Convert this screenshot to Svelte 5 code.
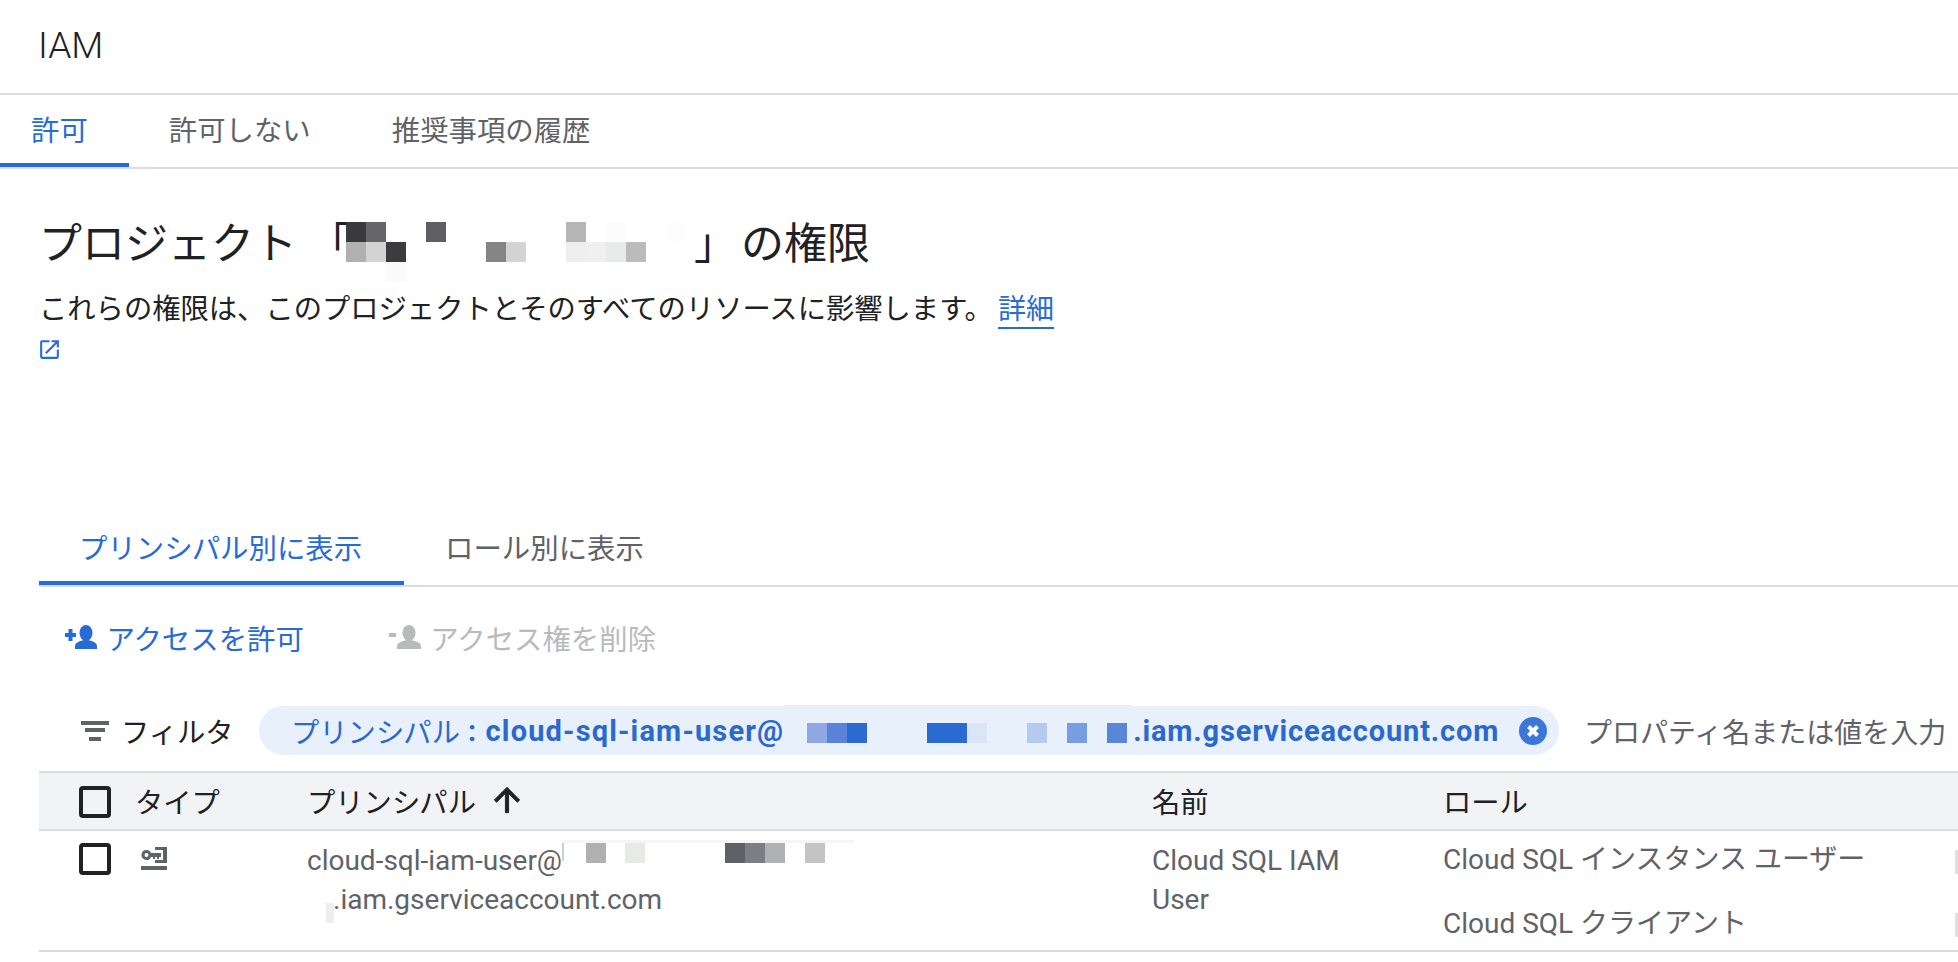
<script>
	// censored parts of the screenshot, drawn as blocks: [x, y, colour]
	const titleBlocks = [
		[0, 0, '#3a3a3c'], [20, 0, '#666668'], [80, 0, '#5f5f61'], [220, 0, '#b5b5b5'], [260, 0, '#fcfcfc'], [320, 0, '#fdfdfd'],
		[0, 20, '#b0b0b0'], [20, 20, '#d3d3d3'], [40, 20, '#3c3c3e'], [140, 20, '#858585'], [160, 20, '#d3d3d3'],
		[220, 20, '#eeeeee'], [240, 20, '#f0f0f0'], [260, 20, '#e8e9e9'], [280, 20, '#bbbbbb'],
		[40, 40, '#fafafa']
	];
	const chipBlocks = [
		[23, 0, '#8fa8e3'], [43, 0, '#5a82d8'], [63, 0, '#2b6ad0'], [143, 0, '#2b6ad0'], [163, 0, '#2b6ad0'],
		[183, 0, '#dae5f8'], [243, 0, '#b5caf0'], [283, 0, '#799de2'], [323, 0, '#5a86d8']
	];
	const rowBlocks = [
		[24, 0, '#b0b0b0'], [63, 0, '#e8eae8'], [163, 0, '#5f6166'], [183, 0, '#7c7e84'], [203, 0, '#b0b1b3'], [243, 0, '#c4c4c4']
	];

	const topTabs = ['許可', '許可しない', '推奨事項の履歴'];
	const roles = ['Cloud SQL インスタンス ユーザー', 'Cloud SQL クライアント'];
</script>

{#snippet blocks(list)}
	{#each list as [x, y, colour]}
		<i class="block" style="left: {x}px; top: {y}px; background: {colour};"></i>
	{/each}
{/snippet}

<div class="page">
	<header class="top">IAM</header>

	<nav class="tabs main-tabs">
		{#each topTabs as tab, i}
			<span class="tab" class:active={i === 0}>{tab}</span>
		{/each}
	</nav>

	<section class="intro">
		<h1>
			<span>プロジェクト</span>
			<span class="bracket-open">「</span>
			<span class="title-mask">{@render blocks(titleBlocks)}</span>
			<span>」</span>
			<span class="suffix">の権限</span>
		</h1>
		<p>
			これらの権限は、このプロジェクトとそのすべてのリソースに影響します。<a href="#top">詳細</a>
			<svg class="ext" viewBox="0 0 24 24"><path d="M19 19H5V5h7V3H5c-1.11 0-2 .9-2 2v14c0 1.1.89 2 2 2h14c1.1 0 2-.9 2-2v-7h-2v7zM14 3v2h3.59l-9.83 9.83 1.41 1.41L19 6.41V10h2V3h-7z" /></svg>
		</p>
	</section>

	<section class="content">
		<nav class="tabs sub-tabs">
			<span class="tab active">プリンシパル別に表示</span>
			<span class="tab">ロール別に表示</span>
		</nav>

		<div class="actions">
			<button class="action">
				<svg viewBox="0 0 32 24">
					<rect x="0" y="8" width="11" height="4" />
					<rect x="3.500" y="4" width="4" height="12" />
					<ellipse cx="21" cy="8" rx="6.500" ry="8" />
					<path d="M10 24v-3c0-3.500 6-6 11-6s11 2.500 11 6v3z" />
				</svg>
				アクセスを許可
			</button>
			<button class="action disabled">
				<svg viewBox="0 0 32 24">
					<rect x="0" y="8" width="7" height="4" />
					<ellipse cx="20" cy="8" rx="6.500" ry="8" />
					<path d="M8 24v-3c0-3.500 7-6 12-6s12 2.500 12 6v3z" />
				</svg>
				アクセス権を削除
			</button>
		</div>

		<div class="filter">
			<svg class="filter-icon" viewBox="0 0 28 20">
				<rect x="0" y="0" width="28" height="4" />
				<rect x="4" y="7" width="20" height="4" />
				<rect x="8" y="16" width="12" height="4" />
			</svg>
			<span class="filter-label">フィルタ</span>
			<div class="chip">
				<span class="chip-key">プリンシパル</span>
				<b class="chip-user">: cloud-sql-iam-user@</b>
				<span class="chip-mask">{@render blocks(chipBlocks)}</span>
				<b class="chip-domain">.iam.gserviceaccount.com</b>
				<svg class="chip-close" viewBox="0 0 28 28">
					<circle cx="14" cy="14" r="14" />
					<path d="M9.500 9.500l9 9M18.500 9.500l-9 9" />
				</svg>
			</div>
			<span class="placeholder">プロパティ名または値を入力</span>
		</div>

		<div class="table">
			<div class="grid head">
				<span class="check"></span>
				<span>タイプ</span>
				<span class="sort">
					プリンシパル
					<svg viewBox="0 0 24 24"><path d="M4 12l1.410 1.410L11 7.830V20h2V7.830l5.580 5.590L20 12l-8-8-8 8z" /></svg>
				</span>
				<span>名前</span>
				<span>ロール</span>
			</div>
			<div class="grid row">
				<span class="check"></span>
				<svg class="key" viewBox="0 0 26 23">
					<path d="M14 0h12v16H14v-3h8V3h-8z" />
					<path fill-rule="evenodd" d="M5.500 3a5 5 0 0 1 4.600 3H20v4h-2v2h-2v-2h-2v2h-2v-2h-1.900a5 5 0 1 1-4.600-7zm0 3a2 2 0 1 0 0 4 2 2 0 0 0 0-4z" />
					<rect x="0" y="19" width="26" height="4" />
				</svg>
				<div class="principal">
					<div class="line">
						cloud-sql-iam-user@<span class="row-mask">{@render blocks(rowBlocks)}</span>
					</div>
					<div class="line second"><i class="stub"></i>.iam.gserviceaccount.com</div>
				</div>
				<div class="name">Cloud SQL IAM<br />User</div>
				<div class="roles">
					{#each roles as role}
						<div>{role}</div>
					{/each}
				</div>
				<div class="ticks">
					<i></i>
					<i></i>
				</div>
			</div>
		</div>
	</section>
</div>

<style>
	:global(body) {
		margin: 0;
		background: #fff;
		overflow: hidden;
	}

	.page {
		width: 1958px;
		height: 962px;
		overflow: hidden;
		font-family: Roboto, 'Noto Sans CJK JP', sans-serif;
		color: #202124;
	}

	.top {
		height: 93px;
		line-height: 91px;
		padding-left: 38px;
		font-size: 37px;
		font-weight: 300;
	}

	.tabs {
		display: flex;
		border-bottom: 2px solid #dadce0;
		font-size: 28.400px;
		color: #5f6368;
	}
	.tab {
		box-sizing: border-box;
		border-bottom: 4px solid transparent;
	}
	.tab.active {
		color: #276bd8;
		border-bottom-color: #276bd8;
	}

	.main-tabs {
		border-top: 2px solid #dadce0;
		height: 72px;
	}
	.main-tabs .tab {
		height: 72px;
		line-height: 73px;
		padding: 0 41px 0 40px;
	}
	.main-tabs .tab:first-child {
		padding: 0 41px 0 31px;
	}

	.intro {
		box-sizing: border-box;
		height: 346px;
		padding: 46px 0 0 39px;
	}
	h1 {
		margin: 0;
		display: flex;
		align-items: center;
		height: 50px;
		font-size: 43px;
		font-weight: 400;
	}
	.bracket-open {
		margin-left: 11px;
	}
	.title-mask {
		position: relative;
		top: 7px;
		display: block;
		width: 348px;
		height: 50px;
		margin-left: -5px;
	}
	.suffix {
		margin-left: 4px;
	}
	.block {
		position: absolute;
		width: 20px;
		height: 20px;
	}
	p {
		margin: 25px 0 0;
		width: 1040px;
		font-size: 28.300px;
		line-height: 39px;
	}
	a {
		margin-left: 5px;
		padding-bottom: 1px;
		font-size: 28px;
		color: #276bd8;
		text-decoration: none;
		border-bottom: 2px solid #276bd8;
	}
	.ext {
		display: block;
		width: 25px;
		height: 25px;
		margin: 8px 0 0 -2px;
		fill: #276bd8;
	}

	.content {
		margin-left: 39px;
	}
	.sub-tabs {
		height: 70px;
	}
	.sub-tabs .tab {
		height: 70px;
		line-height: 70px;
		padding: 0 41px;
	}
	.sub-tabs .tab:first-child {
		padding: 0 42px 0 40px;
	}

	.actions {
		display: flex;
		align-items: center;
		height: 100px;
		padding-left: 26px;
	}
	.action {
		display: flex;
		align-items: center;
		gap: 9.500px;
		padding: 0;
		margin-right: 85px;
		border: 0;
		background: none;
		font: inherit;
		font-size: 28.400px;
		color: #276bd8;
	}
	.action svg {
		width: 32px;
		height: 24px;
		fill: currentColor;
	}
	.action.disabled {
		color: #b9babc;
	}

	.filter {
		display: flex;
		align-items: center;
		height: 49px;
		margin-top: 19px;
		padding-left: 42px;
	}
	.filter-icon {
		width: 28px;
		height: 20px;
		fill: #5f6368;
	}
	.filter-label {
		width: 138px;
		margin-left: 12px;
		font-size: 28.300px;
	}
	.chip {
		box-sizing: border-box;
		display: flex;
		align-items: center;
		flex: none;
		width: 1300px;
		height: 49px;
		padding: 0 12px 0 32px;
		border-radius: 25px;
		background: #e8f0fc;
		color: #2b69cc;
		font-size: 28.300px;
		white-space: pre;
	}
	.chip-key {
		margin-right: 8px;
	}
	.chip b {
		font-size: 29px;
		font-weight: 700;
	}
	.chip-user {
		letter-spacing: 1.150px;
	}
	.chip-domain {
		letter-spacing: 0.850px;
	}
	.chip-mask {
		position: relative;
		top: 2px;
		flex: none;
		width: 349px;
		height: 20px;
	}
	.chip-mask::before {
		content: '';
		position: absolute;
		left: 0;
		right: 0;
		top: -18px;
		height: 18px;
		background: #e8f0fc;
	}
	.chip-close {
		flex: none;
		width: 28px;
		height: 28px;
		margin-left: auto;
		fill: #3b76d9;
	}
	.chip-close path {
		fill: none;
		stroke: #fff;
		stroke-width: 4;
	}
	.placeholder {
		margin-left: 25px;
		font-size: 28px;
		color: #5f6368;
		white-space: nowrap;
	}

	.table {
		margin-top: 16px;
	}
	.grid {
		display: grid;
		grid-template-columns: 56px 172px 845px 291px 512px 100px;
		padding-left: 40px;
	}
	.head {
		align-items: center;
		height: 54px;
		padding-bottom: 2px;
		border-top: 2px solid #dadce0;
		border-bottom: 2px solid #dadce0;
		background: #f1f3f4;
		font-size: 28.300px;
	}
	.check {
		display: block;
		box-sizing: border-box;
		width: 32px;
		height: 32px;
		border: 4px solid #202124;
		border-radius: 4px;
	}
	.head .check {
		margin-top: 4px;
	}
	.sort {
		display: flex;
		align-items: center;
		gap: 12px;
	}
	.sort svg {
		width: 38px;
		height: 38px;
		fill: #202124;
		stroke: #202124;
		stroke-width: 0.600;
	}

	.row {
		height: 109.500px;
		padding-top: 9.500px;
		border-bottom: 2px solid #dadce0;
		font-size: 28px;
		line-height: 39px;
		color: #5f6368;
	}
	.row .check {
		margin-top: 2.500px;
	}
	.key {
		width: 26px;
		height: 23px;
		margin: 6.500px 0 0 6px;
		fill: #5f6368;
	}
	.principal {
		white-space: nowrap;
	}
	.line {
		position: relative;
	}
	.second {
		padding-left: 26px;
	}
	.stub {
		position: absolute;
		left: 19px;
		top: 23px;
		width: 8px;
		height: 20px;
		background: #eeeeee;
	}
	.row-mask {
		position: relative;
		display: inline-block;
		width: 0;
		height: 20px;
		margin-top: 2px;
		vertical-align: top;
	}
	.row-mask::before {
		content: '';
		position: absolute;
		left: 0;
		top: -3px;
		width: 292px;
		height: 3px;
		background: #f5f5f5;
	}
	.row-mask::after {
		content: '';
		position: absolute;
		left: 0;
		top: 0;
		width: 2px;
		height: 18px;
		background: #cfcfcf;
	}
	.roles {
		margin-top: -1px;
	}
	.roles div + div {
		margin-top: 25px;
	}
	.ticks {
		display: flex;
		flex-direction: column;
		gap: 39px;
		margin-top: 9.500px;
	}
	.ticks i {
		width: 3px;
		height: 24px;
		background: #e0e0e0;
	}
</style>
